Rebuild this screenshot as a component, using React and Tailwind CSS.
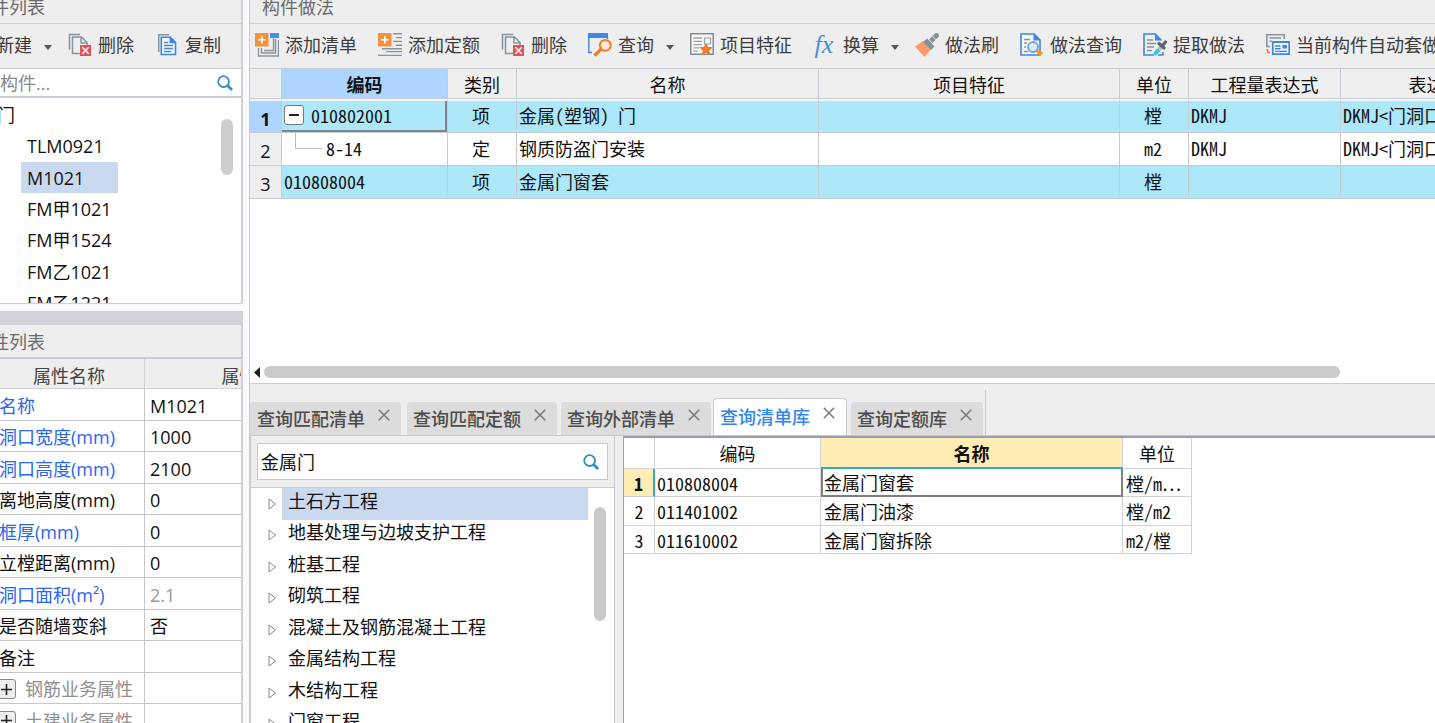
import { useState } from "react";

const tools = [
  { label: "添加清单", icon: "addList" },
  { label: "添加定额", icon: "addQuota" },
  { label: "删除", icon: "remove" },
  { label: "查询", icon: "query", menu: true },
  { label: "项目特征", icon: "feature" },
  { label: "换算", icon: "fx", menu: true },
  { label: "做法刷", icon: "brush" },
  { label: "做法查询", icon: "docSearch" },
  { label: "提取做法", icon: "extract" },
  { label: "当前构件自动套做法", icon: "auto" },
];

const components = ["TLM0921", "M1021", "FM甲1021", "FM甲1524", "FM乙1021", "FM乙1221"];

const properties = [
  { name: "名称", value: "M1021", color: "text-[#2b66ee]" },
  { name: "洞口宽度(mm)", value: "1000", color: "text-[#2b66ee]" },
  { name: "洞口高度(mm)", value: "2100", color: "text-[#2b66ee]" },
  { name: "离地高度(mm)", value: "0" },
  { name: "框厚(mm)", value: "0", color: "text-[#2b66ee]" },
  { name: "立樘距离(mm)", value: "0" },
  { name: "洞口面积(m²)", value: "2.1", color: "text-[#2b66ee]", readOnly: true },
  { name: "是否随墙变斜", value: "否" },
  { name: "备注", value: "" },
  { name: "钢筋业务属性", value: "", group: true },
  { name: "土建业务属性", value: "", group: true },
];

const methods = [
  { code: "010802001", type: "项", name: "金属(塑钢) 门", unit: "樘", expr: "DKMJ", desc: "DKMJ<门洞口面积>" },
  { code: "8-14", type: "定", name: "钢质防盗门安装", unit: "m2", expr: "DKMJ", desc: "DKMJ<门洞口面积>" },
  { code: "010808004", type: "项", name: "金属门窗套", unit: "樘", expr: "", desc: "" },
];

const tabs = [
  { label: "查询匹配清单", space: "pl-[7px] mr-1.5" },
  { label: "查询匹配定额", space: "pl-1.5 mr-1" },
  { label: "查询外部清单", space: "pl-1.5 mr-0.5" },
  { label: "查询清单库", space: "pl-1.5 mr-1" },
  { label: "查询定额库", space: "pl-1.5 mr-0.5" },
];

const chapters = [
  "土石方工程",
  "地基处理与边坡支护工程",
  "桩基工程",
  "砌筑工程",
  "混凝土及钢筋混凝土工程",
  "金属结构工程",
  "木结构工程",
  "门窗工程",
];

const results = [
  { code: "010808004", name: "金属门窗套", unit: "樘/m⋯" },
  { code: "011401002", name: "金属门油漆", unit: "樘/m2" },
  { code: "011610002", name: "金属门窗拆除", unit: "m2/樘" },
];

// grid cells use the half-width Latin glyphs of the Chinese font
const gridFont = "font-['Noto_Sans_CJK_SC',sans-serif] [font-feature-settings:'hwid']";

const icons = {
  addList: (
    <>
      <path d="M15 0h9v5h-9z" fill="#4a90e2" />
      <path d="M9 17.5h9.5V5.5M6.5 15v5h14V6M3.5 15v8h20V7" fill="none" stroke="#8794a0" strokeWidth="1.4" />
      <path d="M0 0h13.5v13.5H0z" fill="#ee9342" />
      <path d="M6.8 3v7.6M3 6.8h7.6" stroke="#fff" strokeWidth="1.6" />
    </>
  ),
  addQuota: (
    <>
      <path d="M15 .8h9M18 4.6h6M15 8.4h9M18 12.2h6M4 15.8h20M8 18.6h16M0 22.4h24" stroke="#8c9299" strokeWidth="1.4" />
      <path d="M0 0h13.5v13.5H0z" fill="#ee9342" />
      <path d="M6.8 3v7.6M3 6.8h7.6" stroke="#fff" strokeWidth="1.6" />
    </>
  ),
  remove: (
    <>
      <path d="M1.5 16.5V1.5H12M12 20.5H4.5V4h9l5.5 5.5V12M13 4.5V10h6" fill="none" stroke="#8794a0" strokeWidth="1.5" />
      <path d="M12 12h11v11H12z" fill="#de5459" />
      <path d="M14.3 14.3l6.4 6.4M20.7 14.3l-6.4 6.4" stroke="#fff" strokeWidth="1.4" />
    </>
  ),
  copy: (
    <>
      <path d="M3.8 19V1.8H14" fill="none" stroke="#8794a0" strokeWidth="1.5" />
      <path d="M6.3 4.3h9.2l5 5v12.2H6.3z" fill="#f7fbff" stroke="#3f87e0" strokeWidth="1.6" />
      <path d="M14.5 3.5v6.8h6.8z" fill="#3f87e0" />
      <path d="M9 9.5h4M9 12.5h9M9 15.5h9M9 18.5h7" stroke="#3f87e0" strokeWidth="1.3" />
    </>
  ),
  query: (
    <>
      <path d="M0 0h20v5H0z" fill="#3f87e0" />
      <path d="M.8 4v15.5H4M19.5 4v2" fill="none" stroke="#3f87e0" strokeWidth="1.4" />
      <circle cx="17.3" cy="12.3" r="5.4" fill="#fbe9dc" stroke="#f07c28" strokeWidth="2" />
      <path d="M13 16.3L6.5 22.6" stroke="#f07c28" strokeWidth="3.4" />
    </>
  ),
  feature: (
    <>
      <path d="M.8.8h22.4v20.4H.8z" fill="#f8f8f8" stroke="#7f8b96" strokeWidth="1.5" />
      <path d="M3.5 5H12M3.5 8.3H12M3.5 11.6H12M3.5 14.9H9M3.5 18.2H8" stroke="#9aa4ad" strokeWidth="1.3" />
      <path d="M14.5 5h6v6h-6z" fill="none" stroke="#9aa4ad" strokeWidth="1.2" />
      <path d="M16 9.5l2 4.3 5 .4-3.7 3.2 1.2 5-4.5-2.6-4.5 2.6 1.2-5L9 14.2l5-.4z" fill="#f07c28" />
    </>
  ),
  brush: (
    <>
      <path d="M0 13.5l8-5.5 8 8.5-6.5 7.5z" fill="#ff9c6b" />
      <path d="M8 9l4-3.5 7.5 8-3.5 3.5z" fill="#84939b" />
      <path d="M14.5 9.5l7-7" stroke="#84939b" strokeWidth="5" strokeLinecap="round" />
      <path d="M13 5.5l6 7M17.5 3l4 4.5" stroke="#efefef" strokeWidth=".9" />
    </>
  ),
  docSearch: (
    <>
      <path d="M1 1h13l6 6v15H1z" fill="#f4f8fd" stroke="#3f87e0" strokeWidth="1.6" />
      <path d="M13.5 0v7.5H21z" fill="#3f87e0" />
      <path d="M4 6.5h6M4 10h3M4 14h2M4 18.5h4" stroke="#8794a0" strokeWidth="1.4" />
      <circle cx="13" cy="14" r="5" fill="#dceafb" stroke="#6da2e6" strokeWidth="1.8" />
      <path d="M17.5 17.5l4 4" stroke="#f39a16" strokeWidth="4.4" />
    </>
  ),
  extract: (
    <>
      <path d="M18 7l-6-6H1v21h10M20 19v3h-5" fill="none" stroke="#3f87e0" strokeWidth="1.6" />
      <path d="M12 0v7.5h7z" fill="#3f87e0" />
      <path d="M4 7h6M4 10.5h9M4 14h7M4 17.5h5" stroke="#8794a0" strokeWidth="1.4" />
      <path d="M12.5 20.5l7-8" stroke="#b3bbc2" strokeWidth="4" />
      <path d="M11.5 21.5l4-4.5" stroke="#2cc5e0" strokeWidth="3.4" />
      <path d="M16 10.5l5 4.5M19.5 12.5l3-3.5" stroke="#58646e" strokeWidth="3.2" strokeLinecap="round" />
    </>
  ),
  auto: (
    <>
      <path d="M4 13.5H.8V1.8h17.4V6M3.5 5H15M3.5 8.2H6" fill="none" stroke="#8794a0" strokeWidth="1.6" />
      <path d="M1.5 16v3.5H4" fill="none" stroke="#f07c28" strokeWidth="1.6" />
      <path d="M6.8 8.8h16.4v12.4H6.8z" fill="#eef5fd" stroke="#3f87e0" strokeWidth="1.7" />
      <path d="M6.5 8h17v2h-17zM16.5 12h4.5v3.5h-4.5z" fill="#3f87e0" />
      <path d="M9 13h5.5M9 15.8h5.5M9 18.4h12" stroke="#3f87e0" strokeWidth="1.4" />
    </>
  ),
};

const ToolIcon = ({ name }) =>
  name === "fx" ? (
    <span className="w-6 shrink-0 pr-0.5 text-center font-['Liberation_Serif',serif] text-[26px] leading-6 text-[#4a8fdc] italic">
      fx
    </span>
  ) : (
    <svg viewBox="0 0 24 24" className="size-6 shrink-0">
      {icons[name]}
    </svg>
  );

const ToolButton = ({ label, icon, menu }) => (
  <button
    type="button"
    className={`flex shrink-0 items-center whitespace-nowrap text-[#3c3c3c] ${menu ? "pr-4" : "pr-[21px]"}`}
  >
    {icon && (
      <span className="mr-1.5 flex">
        <ToolIcon name={icon} />
      </span>
    )}
    {label}
    {menu && (
      <svg viewBox="0 0 8 5" className="mt-1 ml-3 h-[5px] w-2">
        <path d="M0 0h8L4 5z" fill="#555" />
      </svg>
    )}
  </button>
);

const SearchIcon = () => (
  <svg viewBox="0 0 16 16" className="size-4">
    <circle cx="6.6" cy="6.6" r="5.4" fill="none" stroke="#2f8fc9" strokeWidth="1.8" />
    <path d="M10.5 10.5l4.5 4.5" stroke="#2f8fc9" strokeWidth="2.8" />
  </svg>
);

const ComponentPanel = () => {
  const [selected, setSelected] = useState("M1021");

  return (
    <section className="shrink-0 border-r-2 border-b border-[#ccd0d8]">
      <h2 className="-ml-[9px] h-6 border-b border-[#cccfd2] bg-[#eee] leading-[14px] text-[#6b6b6b]">
        件列表
      </h2>
      <div className="flex h-[45px] overflow-hidden border-b border-[#c8ccd2] bg-[#eee]">
        <div className="-ml-1 flex pb-0.5">
          <ToolButton label="新建" menu />
          <ToolButton label="删除" icon="remove" />
          <ToolButton label="复制" icon="copy" />
        </div>
      </div>
      <div className="flex h-[29px] items-center border-b-2 border-[#c8ccd4] bg-white pr-2">
        <input
          aria-label="搜索构件"
          placeholder="构件..."
          className="min-w-0 flex-1 outline-none placeholder:text-[#8a8a8a]"
        />
        <button type="button" aria-label="搜索">
          <SearchIcon />
        </button>
      </div>
      <div className="flex h-[205px] overflow-hidden bg-white pt-px pr-2">
        <ul className="flex h-[220px] flex-1 flex-col">
          <li className="-ml-[3px] flex flex-1 items-center">门</li>
          {components.map((item) => (
            <li key={item} className="flex flex-1 pl-[21px]">
              <button
                type="button"
                onClick={() => setSelected(item)}
                className={`flex w-[97px] items-center pl-1.5 ${
                  item === selected ? "bg-[#c9d9f0]" : ""
                }`}
              >
                {item}
              </button>
            </li>
          ))}
        </ul>
        <div className="mt-5 h-14 w-3 rounded-full bg-[#cdcdcd]" />
      </div>
    </section>
  );
};

const PropertyPanel = () => (
  <section className="mt-[7px] min-h-0 flex-1 overflow-hidden border-r-2 border-[#ccd0d8] bg-white">
    <div className="h-3.5 bg-[#d2d3da]" />
    <h2 className="-ml-[9px] h-[34px] border-b-2 border-[#c8ccd4] bg-[#eee] leading-[34px] text-[#6b6b6b]">
      性列表
    </h2>
    <table className="w-[352px] table-fixed border-separate border-spacing-0">
      <colgroup>
        <col className="w-[145px]" />
        <col />
      </colgroup>
      <thead>
        <tr className="h-[30px] bg-[#eee] text-[#444]">
          <th className="border-r border-b border-[#cfd3d7] pt-1 pr-1.5 font-normal">属性名称</th>
          <th className="border-b border-[#cfd3d7] pt-1 font-normal">属性值</th>
        </tr>
      </thead>
      <tbody>
        {properties.map((p) => (
          <tr key={p.name} className="odd:h-8 even:h-[31px]">
            <td
              className={`border-r border-b border-[#c4c8cc] pt-0.5 whitespace-nowrap ${
                p.group ? "text-[#8f8f8f]" : p.color || ""
              }`}
            >
              {p.group ? (
                <div className="-ml-1 flex items-center">
                  <button
                    type="button"
                    aria-label="展开"
                    className="mr-[9px] flex size-5 items-center justify-center rounded-[3px] border border-[#888] bg-[#eee]"
                  >
                    <svg viewBox="0 0 11 11" className="size-[11px]">
                      <path d="M5.5 0v11M0 5.5h11" stroke="#222" strokeWidth="1.6" />
                    </svg>
                  </button>
                  {p.name}
                </div>
              ) : (
                <div className="-ml-px">{p.name}</div>
              )}
            </td>
            <td className={`border-b border-[#c4c8cc] pt-0.5 pl-[5px] ${p.readOnly ? "text-[#999]" : ""}`}>
              {p.value}
            </td>
          </tr>
        ))}
      </tbody>
    </table>
  </section>
);

const MethodTable = () => {
  const cell = "border-r border-b border-[#c5ccd4]";

  return (
    <table className="w-[1317px] table-fixed border-separate border-spacing-0">
      <colgroup>
        <col className="w-8" />
        <col className="w-[166px]" />
        <col className="w-[69px]" />
        <col className="w-[302px]" />
        <col className="w-[301px]" />
        <col className="w-[69px]" />
        <col className="w-[152px]" />
        <col />
      </colgroup>
      <thead>
        <tr className="h-[30px] bg-[#efefef]">
          <th className={cell} aria-label="序号" />
          <th className={`${cell} bg-[#add5ff] pt-0.5 font-bold`}>编码</th>
          <th className={`${cell} pt-0.5 font-normal`}>类别</th>
          <th className={`${cell} pt-0.5 font-normal`}>名称</th>
          <th className={`${cell} pt-0.5 font-normal`}>项目特征</th>
          <th className={`${cell} pt-0.5 font-normal`}>单位</th>
          <th className={`${cell} pt-0.5 font-normal`}>工程量表达式</th>
          <th className={`${cell} pt-0.5 font-normal`}>表达式说明</th>
        </tr>
      </thead>
      <tbody className={gridFont}>
        {methods.map((m, i) => {
          const first = i === 0;
          const child = i === 1;
          const body = first ? `${cell} border-t-2 border-t-[#f1f7fa]` : cell;
          const text = `${body} ${first ? "pb-1" : "pb-0.5"}`;
          return (
            <tr
              key={m.code}
              className={`${first ? "h-[34px]" : "h-[33px]"} ${child ? "bg-white" : "bg-[#ade8fa]"}`}
            >
              <th
                className={`${body} pt-1 font-['Open_Sans',sans-serif] ${
                  first ? "bg-[#add5ff] font-bold" : "bg-[#efefef] font-normal"
                }`}
              >
                {i + 1}
              </th>
              <td
                className={
                  first ? `${text} shadow-[inset_-2px_-2px_0_#808488]` : child ? body : text
                }
              >
                {first && (
                  <div className="flex items-center pl-0.5">
                    <button
                      type="button"
                      aria-label="折叠"
                      className="mr-[7px] flex size-5 items-center justify-center rounded-[3px] border border-[#777] bg-white"
                    >
                      <span className="h-0.5 w-2.5 bg-[#222]" />
                    </button>
                    {m.code}
                  </div>
                )}
                {child && (
                  <div className="flex h-8 pl-[13px]">
                    <span className="mr-1 h-4 w-[27px] border-b border-l border-[#b8bcc0]" />
                    <span className="self-center pb-0.5">{m.code}</span>
                  </div>
                )}
                {i === 2 && <div className="pl-0.5">{m.code}</div>}
              </td>
              <td className={`${text} pr-0.5 text-center`}>{m.type}</td>
              <td className={`${text} pl-0.5`}>{m.name}</td>
              <td className={body} />
              <td className={`${text} pr-0.5 text-center`}>{m.unit}</td>
              <td className={`${text} pl-0.5`}>{m.expr}</td>
              <td className={`${text} pl-0.5`}>{m.desc}</td>
            </tr>
          );
        })}
      </tbody>
    </table>
  );
};

const MethodPanel = () => (
  <section className="flex h-[384px] shrink-0 flex-col overflow-hidden border-b border-l border-[#c8ccd2] bg-white">
    <h2 className="h-6 shrink-0 border-b border-[#cccfd2] bg-[#eee] pl-3 leading-[14px] text-[#6b6b6b]">
      构件做法
    </h2>
    <div className="flex h-[45px] shrink-0 overflow-hidden border-b border-[#c8ccd2] bg-[#eee] pb-0.5 pl-[5px]">
      {tools.map((t) => (
        <ToolButton key={t.label} {...t} />
      ))}
    </div>
    <div className="flex-1 overflow-hidden">
      <MethodTable />
    </div>
    <div className="mb-[5px] flex items-center pr-[95px] pl-1">
      <svg viewBox="0 0 6 11" className="mr-1 h-[11px] w-1.5">
        <path d="M6 0v11L0 5.5z" fill="#222" />
      </svg>
      <div className="h-3 flex-1 rounded-full bg-[#cbcbcb]" />
    </div>
  </section>
);

const TabBar = ({ active, onSelect }) => (
  <div className="flex h-[52px] shrink-0 items-end border-b border-l border-[#c5cad0] bg-[#eee]">
    {tabs.map((tab, i) => (
      <div
        key={tab.label}
        className={`flex shrink-0 items-center gap-[13px] rounded-t pr-[11px] whitespace-nowrap ${tab.space} ${
          i === active
            ? "h-[37px] border-x border-t border-[#c9ced4] bg-white text-[#2f86ee]"
            : "h-[33px] bg-[#dcdcdc] text-[#4c4c4c]"
        }`}
      >
        <button type="button" onClick={() => onSelect(i)} className="font-medium">
          {tab.label}
        </button>
        <button type="button" aria-label={`关闭${tab.label}`} className="pb-2">
          <svg viewBox="0 0 12 12" className="size-3">
            <path d="M.8.8l10.4 10.4M11.2.8L.8 11.2" stroke="#777" strokeWidth="1.5" />
          </svg>
        </button>
      </div>
    ))}
    <div className="h-[45px] w-px bg-[#c5cad0]" />
  </div>
);

const ChapterTree = () => {
  const [keyword, setKeyword] = useState("金属门");
  const [selected, setSelected] = useState(0);

  return (
    <div className="flex w-[366px] shrink-0 flex-col overflow-hidden border-r border-l-2 border-[#c8ccd2] bg-[#eee]">
      <div className="border-b border-[#c8ccd2] px-1.5 py-[7px]">
        <div className="flex h-[37px] items-center border border-[#c5cad2] bg-white pr-2 pl-[3px]">
          <input
            aria-label="关键字"
            value={keyword}
            onChange={(e) => setKeyword(e.target.value)}
            className="min-w-0 flex-1 outline-none"
          />
          <button type="button" aria-label="搜索">
            <SearchIcon />
          </button>
        </div>
      </div>
      <div className="flex min-h-0 flex-1 overflow-hidden bg-white pr-2">
        <ul className="flex h-[252px] flex-1 flex-col">
          {chapters.map((c, i) => (
            <li key={c} className="flex flex-1 items-stretch pr-1.5">
              <span className="flex w-[31px] items-center pl-[17px]">
                <svg viewBox="0 0 9 12" className="h-3 w-[9px]">
                  <path d="M1 1v10l6.5-5z" fill="#fff" stroke="#888" />
                </svg>
              </span>
              <button
                type="button"
                onClick={() => setSelected(i)}
                className={`flex flex-1 items-center pb-1.5 pl-1.5 ${i === selected ? "bg-[#c9d9f0]" : ""}`}
              >
                {c}
              </button>
            </li>
          ))}
        </ul>
        <div className="mt-[19px] h-[114px] w-3 shrink-0 rounded-full bg-[#cbcbcb]" />
      </div>
    </div>
  );
};

const ResultTable = () => {
  const cell = "border-r border-b border-[#d0d3d6]";

  return (
    <div className="min-w-0 flex-1 overflow-hidden border-t-2 border-l border-[#97a0aa] bg-white">
      <table className={`w-[568px] table-fixed border-separate border-spacing-0 ${gridFont}`}>
        <colgroup>
          <col className="w-[31px]" />
          <col className="w-[166px]" />
          <col className="w-[302px]" />
          <col />
        </colgroup>
        <thead>
          <tr className="h-[31px]">
            <th className={cell} aria-label="序号" />
            <th className={`${cell} font-normal`}>编码</th>
            <th className="border-r border-b-2 border-r-[#d0d3d6] border-b-[#35a5d5] bg-[#ffedb5] font-bold">
              名称
            </th>
            <th className={`${cell} font-normal`}>单位</th>
          </tr>
        </thead>
        <tbody>
          {results.map((r, i) => (
            <tr key={r.code} className="odd:h-[28px] even:h-[29px]">
              <th
                className={
                  i === 0
                    ? "border-r-2 border-b border-r-[#35a5d5] border-b-[#d0d3d6] bg-[#ffedb5] font-bold"
                    : `${cell} font-normal`
                }
              >
                {i + 1}
              </th>
              <td className={`${cell} pl-0.5`}>{r.code}</td>
              <td
                className={
                  i === 0 ? "border-r-2 border-b-2 border-l-2 border-[#808080] pl-px" : `${cell} pl-[3px]`
                }
              >
                {r.name}
              </td>
              <td className={`${cell} pl-[3px] whitespace-nowrap`}>{r.unit}</td>
            </tr>
          ))}
        </tbody>
      </table>
    </div>
  );
};

const App = () => {
  const [tab, setTab] = useState(3);

  return (
    <div className="flex h-screen overflow-hidden bg-[#fbfbfb] font-['Open_Sans','Noto_Sans_CJK_SC',sans-serif] text-lg leading-6 text-[#111]">
      <aside className="flex w-[243px] shrink-0 flex-col overflow-hidden">
        <ComponentPanel />
        <PropertyPanel />
      </aside>
      <main className="ml-1.5 flex min-w-0 flex-1 flex-col">
        <MethodPanel />
        <TabBar active={tab} onSelect={setTab} />
        <div className="flex min-h-0 flex-1 bg-[#eee]">
          <ChapterTree />
          <div className="w-2 shrink-0" />
          <ResultTable />
        </div>
      </main>
    </div>
  );
};

export default App;
